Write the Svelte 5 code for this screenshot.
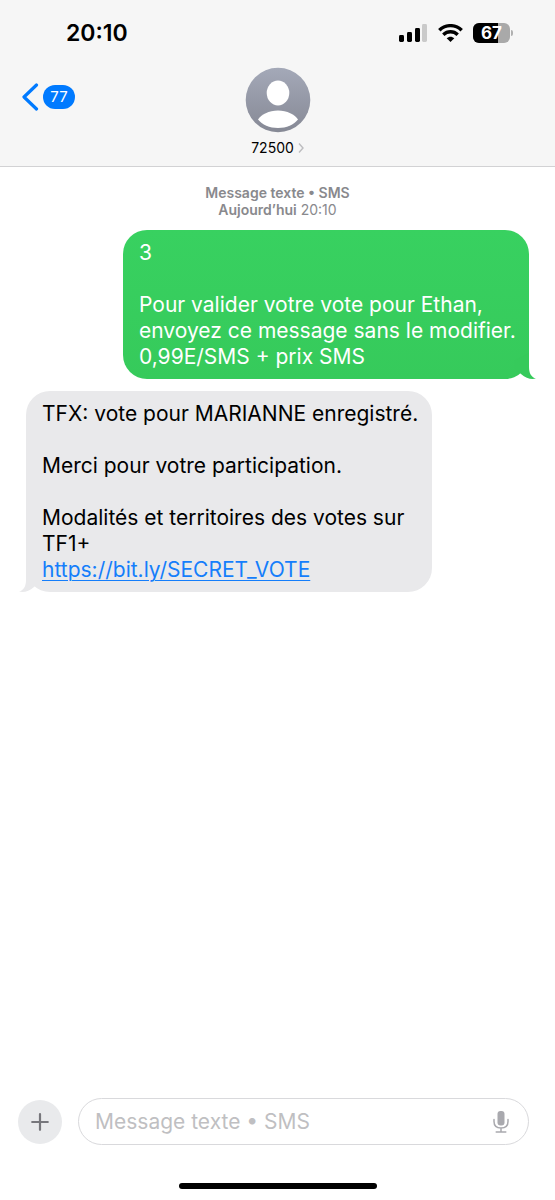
<script>
  let { contact = '72500', unread = 77, battery = 67 } = $props()

  const messages = [
    {
      id: 1,
      from: 'me',
      text: '3\n\nPour valider votre vote pour Ethan, envoyez ce message sans le modifier.\n0,99E/SMS + prix SMS'
    },
    {
      id: 2,
      from: 'them',
      text: 'TFX: vote pour MARIANNE enregistré.\n\nMerci pour votre participation.\n\nModalités et territoires des votes sur TF1+',
      link: 'https://bit.ly/SECRET_VOTE'
    }
  ]

  let draft = $state('')
</script>

<div class="phone">
  <header class="header">
    <!-- status bar -->
    <div class="status">
      <span class="status__time">20:10</span>
      <div class="status__icons">
        <svg width="29" height="18" viewBox="0 0 29 18" aria-hidden="true">
          <rect x="0" y="11" width="5" height="7" rx="1.4" />
          <rect x="8" y="8" width="5" height="10" rx="1.4" />
          <rect x="16" y="4" width="5" height="14" rx="1.4" />
          <rect x="23" y="0" width="5" height="18" rx="1.4" fill="#cacaca" />
        </svg>
        <svg width="25" height="18" viewBox="0 0 25 18" fill="none" stroke="#000" stroke-width="3.4" aria-hidden="true">
          <path d="M1.3 6.3C7.6 0.1 17.4 0.1 23.7 6.3" />
          <path d="M5.3 10.7C9.4 6.8 15.6 6.8 19.7 10.7" />
          <path d="M8.7 14.2C10.9 12.1 14.1 12.1 16.3 14.2L12.5 18Z" fill="#000" stroke="none" />
        </svg>
        <div class="battery">
          <div class="battery__body">
            <div class="battery__fill" style="width: {battery}%"></div>
            <span class="battery__label">{battery}</span>
          </div>
          <div class="battery__cap"></div>
        </div>
      </div>
    </div>

    <!-- nav bar -->
    <div class="nav">
      <button class="back" aria-label="Retour">
        <svg width="17" height="28" viewBox="0 0 17 28" fill="none" stroke="#007aff" stroke-width="3.2" stroke-linecap="round" stroke-linejoin="round" aria-hidden="true">
          <path d="M14.5 2L2 14L14.5 26" />
        </svg>
        <span class="back__count">{unread}</span>
      </button>

      <button class="contact">
        <svg width="66" height="66" viewBox="0 0 66 66" aria-hidden="true">
          <defs>
            <linearGradient id="avatar" x1="0" y1="0" x2="0" y2="1">
              <stop offset="0" stop-color="#a4a9b8" />
              <stop offset="1" stop-color="#868995" />
            </linearGradient>
          </defs>
          <circle cx="33" cy="33" r="32.3" fill="url(#avatar)" />
          <ellipse cx="33" cy="26" rx="11.3" ry="12.4" fill="#fff" />
          <path d="M13 52.5C16 47.5 24 43.5 33 43.5C42 43.5 50 47.5 53 52.5C49 57.5 41.5 61 33 61C24.5 61 17 57.5 13 52.5Z" fill="#fff" />
        </svg>
        <span class="contact__name">
          {contact}
          <svg width="6" height="10" viewBox="0 0 6 10" fill="none" stroke="#bcbcbf" stroke-width="1.4" aria-hidden="true">
            <path d="M1 0.5L5 5L1 9.5" />
          </svg>
        </span>
      </button>
    </div>
  </header>

  <main class="thread">
    <p class="stamp">
      <strong>Message texte • SMS</strong><br />
      <strong>Aujourd’hui</strong> 20:10
    </p>

    {#each messages as msg (msg.id)}
      <div class="bubble bubble--{msg.from}">
        <p>{msg.text}</p>
        {#if msg.link}
          <a href={msg.link}>{msg.link}</a>
        {/if}
        <svg class="bubble__tail" width="22" height="26" viewBox="0 0 22 26" aria-hidden="true">
          <path d="M15 0V14C15 20 17 24 22 25.6C17 26.6 12 25.5 7 21L0 14V8Z" />
        </svg>
      </div>
    {/each}
  </main>

  <footer class="composer">
    <button class="plus" aria-label="Ajouter">
      <svg width="18" height="18" viewBox="0 0 18 18" stroke="#77777c" stroke-width="2.2" stroke-linecap="round" aria-hidden="true">
        <path d="M9 1.2V16.8M1.2 9H16.8" />
      </svg>
    </button>
    <div class="field">
      <input type="text" placeholder="Message texte • SMS" aria-label="Message" bind:value={draft} />
      <button class="mic" aria-label="Dicter">
        <svg width="16" height="24" viewBox="0 0 16 24" fill="none" stroke="#a9a9ae" stroke-width="1.5" stroke-linecap="round" aria-hidden="true">
          <rect x="4.5" y="1" width="7" height="14.5" rx="3" fill="#a9a9ae" stroke="none" />
          <path d="M1 9.5V11.5C1 15.8 4 18 8 18C12 18 15 15.8 15 11.5V9.500M8 18V22M3.200 22H12.800" />
        </svg>
      </button>
    </div>
  </footer>
  <div class="home"></div>
</div>

<style>
  :global(body) {
    background: #fff;
  }

  .phone {
    min-height: 100vh;
    display: flex;
    flex-direction: column;
    font-family: Inter, 'Liberation Sans', sans-serif;
    color: #000;
  }

  button {
    padding: 0;
    border: 0;
    background: none;
    font: inherit;
    color: inherit;
  }

  svg {
    display: block;
  }

  p {
    margin: 0;
  }

  /* header */
  .header {
    background: #f6f6f6;
    border-bottom: 1px solid #d2d2d4;
  }

  .status {
    display: flex;
    align-items: center;
    justify-content: space-between;
    height: 66px;
    padding: 0 42px 0 66px;
  }

  .status__time {
    font-size: 23px;
    font-weight: 600;
  }

  .status__icons {
    display: flex;
    align-items: center;
    gap: 10px;
  }

  .battery {
    display: flex;
    align-items: center;
    gap: 1px;
  }

  .battery__body {
    position: relative;
    width: 37px;
    height: 20px;
    border-radius: 6px;
    background: #a9a9a9;
    overflow: hidden;
  }

  .battery__fill {
    height: 100%;
    background: #000;
  }

  .battery__label {
    position: absolute;
    inset: 0;
    font-size: 17px;
    font-weight: 700;
    line-height: 20px;
    text-align: center;
    color: #fff;
  }

  .battery__cap {
    width: 2px;
    height: 6px;
    border-radius: 0 2px 2px 0;
    background: #b0b0b0;
  }

  .nav {
    display: grid;
    grid-template-columns: 1fr auto 1fr;
    align-items: start;
    height: 100px;
    padding: 0 22px;
  }

  .back {
    display: flex;
    align-items: center;
    gap: 4px;
    justify-self: start;
    height: 62px;
  }

  .back__count {
    width: 32px;
    border-radius: 12px;
    background: #007aff;
    color: #fff;
    font-size: 15px;
    line-height: 24px;
  }

  .contact {
    display: flex;
    flex-direction: column;
    align-items: center;
    gap: 6px;
    padding-top: 1px;
  }

  .contact__name {
    display: flex;
    align-items: center;
    gap: 4px;
    font-size: 14px;
    line-height: 18px;
  }

  /* thread */
  .thread {
    flex: 1;
    display: flex;
    flex-direction: column;
    gap: 12px;
    padding: 17px 26px;
  }

  .stamp {
    color: #89898d;
    font-size: 14px;
    line-height: 17px;
    text-align: center;
  }

  .stamp strong {
    font-weight: 600;
  }

  .bubble {
    position: relative;
    box-sizing: border-box;
    max-width: 406px;
    padding: 10px 12px 9px 16px;
    border-radius: 24px;
    font-size: 21px;
    line-height: 26px;
  }

  .bubble p {
    white-space: pre-line;
  }

  .bubble a {
    color: #157efb;
    text-decoration-thickness: 1px;
    text-underline-offset: 3px;
  }

  .bubble--me {
    align-self: flex-end;
    background: linear-gradient(#38d160, #36ca5b);
    color: #fff;
  }

  .bubble--them {
    align-self: flex-start;
    background: #e9e9eb;
  }

  .bubble__tail {
    position: absolute;
    right: -7px;
    bottom: 0;
    fill: #36ca5b;
  }

  .bubble--them .bubble__tail {
    right: auto;
    left: -7px;
    transform: scaleX(-1);
    fill: #e9e9eb;
  }

  /* composer */
  .composer {
    display: flex;
    align-items: center;
    gap: 16px;
    padding: 0 26px 0 18px;
  }

  .plus {
    display: grid;
    place-items: center;
    width: 44px;
    height: 44px;
    border-radius: 50%;
    background: #e9eaec;
  }

  .field {
    flex: 1;
    display: flex;
    align-items: center;
    box-sizing: border-box;
    height: 47px;
    padding: 0 19px 0 16px;
    border: 1px solid #d9d9dc;
    border-radius: 24px;
  }

  .field input {
    flex: 1;
    min-width: 0;
    padding: 0;
    border: 0;
    outline: 0;
    background: none;
    font: inherit;
    font-size: 21px;
  }

  .field input::placeholder {
    color: #bfbfc2;
    opacity: 1;
  }

  .home {
    align-self: center;
    width: 198px;
    height: 6px;
    margin: 38px 0 11px;
    border-radius: 3px;
    background: #000;
  }
</style>
